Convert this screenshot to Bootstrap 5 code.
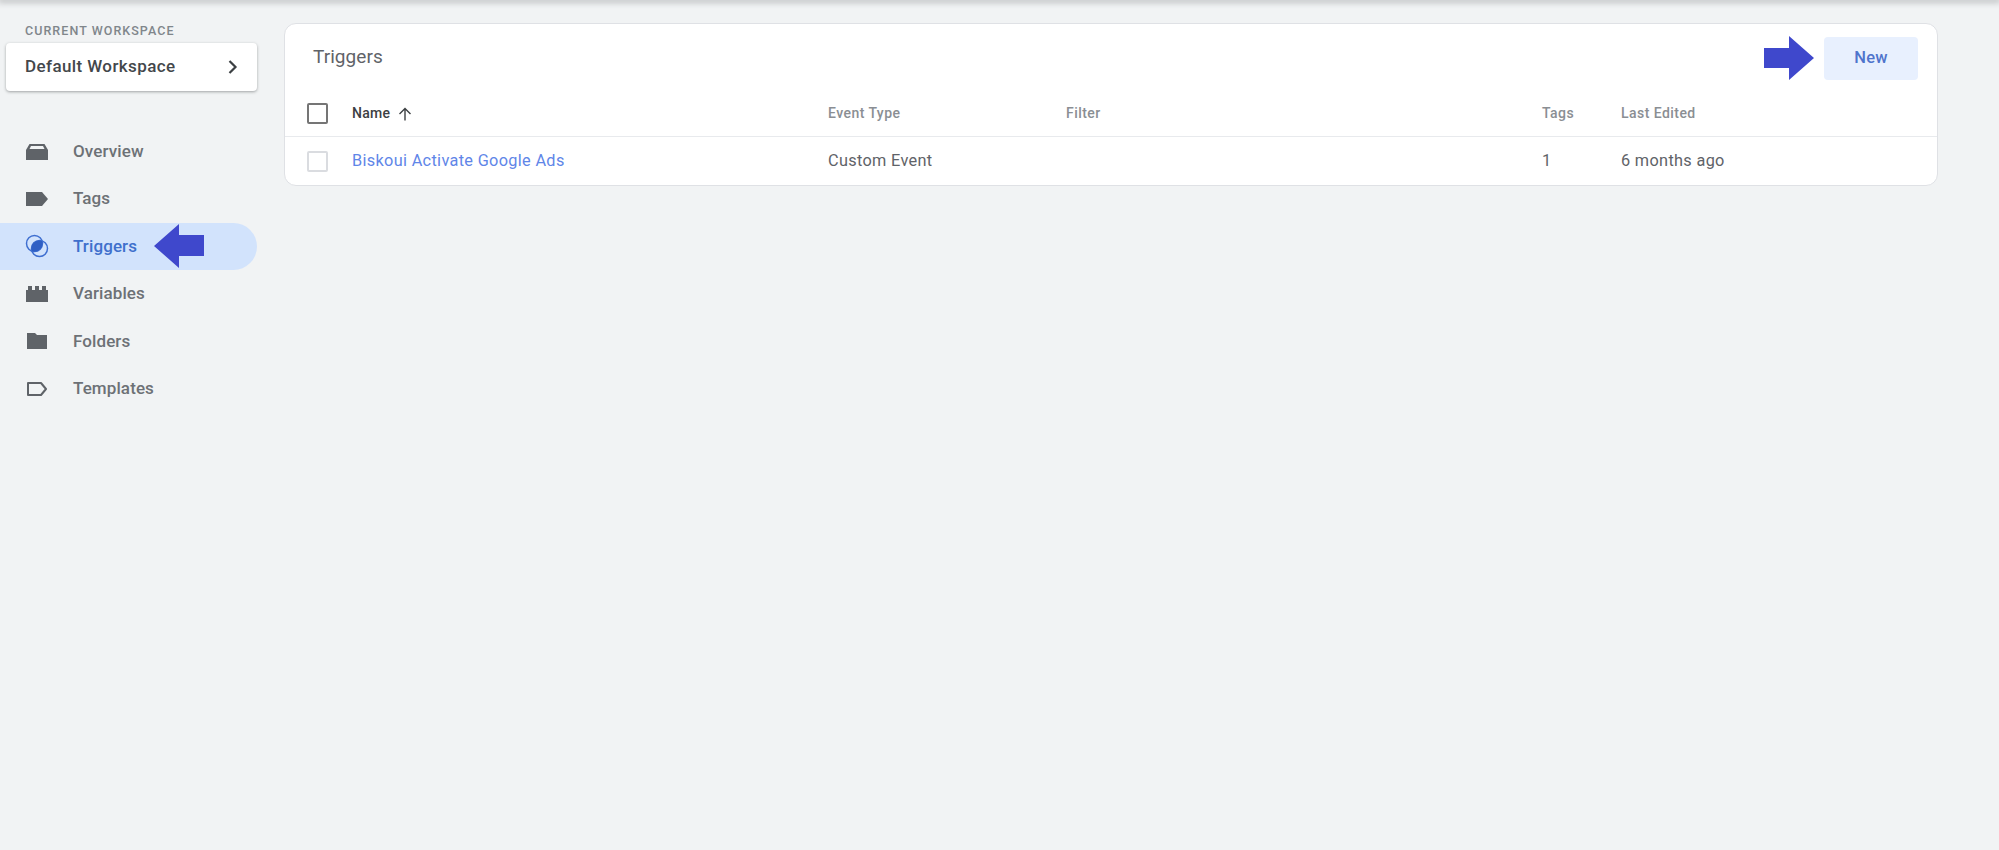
<!DOCTYPE html>
<html lang="en">
<head>
    <meta charset="UTF-8">
    <meta name="viewport" content="width=device-width, initial-scale=1">
    <title>Triggers</title>
    <link href="https://cdn.jsdelivr.net/npm/bootstrap@5.3.0/dist/css/bootstrap.min.css" rel="stylesheet">
    <script src="https://cdn.jsdelivr.net/npm/bootstrap@5.3.0/dist/js/bootstrap.bundle.min.js"></script>
    <style>
        html, body { height: 100%; }
        body {
            background: #f1f3f4;
            font-family: Roboto, "Liberation Sans", sans-serif;
            color: #5f6368;
            overflow: hidden;
        }
        .top-shade {
            height: 0;
            box-shadow: 0 0 6px 2px rgba(60, 64, 67, .38);
        }
        .side-col { width: 257px; padding-top: 24px; flex: none; }
        .ws-label {
            margin-left: 25px;
            font-size: 12.5px;
            line-height: 14px;
            font-weight: 500;
            letter-spacing: 1.05px;
            color: #80868b;
        }
        .ws-box {
            margin: 5px 0 0 6px;
            height: 48px;
            padding: 0 18px 0 19px;
            background: #fff;
            border-radius: 4px;
            box-shadow: 0 1px 3px rgba(60, 64, 67, .45);
            font-size: 17px;
            font-weight: 500;
            letter-spacing: .4px;
            color: #43474b;
        }
        .side-nav { margin-top: 37px; }
        .side-link {
            height: 47.4px;
            padding-left: 25px;
            font-size: 17px;
            font-weight: 500;
            letter-spacing: .1px;
            color: #6d7176;
            text-decoration: none;
            border-radius: 0 24px 24px 0;
        }
        .side-link.on { background: #d2e3fc; color: #3f70cc; }
        .side-ico { width: 24px; height: 24px; margin-right: 24px; flex: none; }
        .mark-left { margin-left: 17px; }
        .main-col { padding: 23px 61px 0 27px; flex: 1; min-width: 0; }
        .trig-card {
            background: #fff;
            border: 1px solid #dfe1e5;
            border-radius: 12px;
            height: 163px;
        }
        .trig-head { height: 72px; padding: 12px 19px 0 28px; }
        .trig-title { font-size: 19px; line-height: 24px; color: #5f6368; margin-top: 9px; letter-spacing: .05px; }
        .new-btn {
            width: 94px;
            height: 43px;
            background: #e8f0fe;
            border: 0;
            border-radius: 4px;
            color: #4f74cc;
            font-size: 16.5px;
            font-weight: 500;
            letter-spacing: .3px;
        }
        .mark-right { margin-right: 10px; }
        .trig-grid {
            display: grid;
            grid-template-columns: 67px 476px 238px 476px 79px 1fr;
            align-items: center;
        }
        .grid-head {
            height: 41px;
            padding-bottom: 5px;
            font-size: 14px;
            font-weight: 500;
            letter-spacing: .45px;
            color: #8a8e93;
            border-bottom: 1px solid #e8eaed;
        }
        .grid-row { height: 47px; padding-top: 1px; font-size: 16.3px; letter-spacing: .33px; color: #5f6368; }
        .check-cell { padding-left: 22px; }
        .fake-check { display: block; width: 21px; height: 21px; border-radius: 2px; }
        .fake-check.dark { border: 2px solid #757575; }
        .fake-check.pale { border: 2px solid #dadce0; }
        .name-head { color: #3c4043; letter-spacing: .3px; }
        .trig-link { color: #5f86e8; text-decoration: none; }
    </style>
</head>
<body>
    <div class="top-shade"></div>
    <div class="d-flex">
        <div class="side-col">
            <div class="ws-label">CURRENT WORKSPACE</div>
            <div class="ws-box d-flex align-items-center justify-content-between">
                <span>Default Workspace</span>
                <svg width="12" height="14" viewBox="0 0 12 14"><path d="M2.500 1 8.500 7l-6 6" fill="none" stroke="#3c4043" stroke-width="2.200"/></svg>
            </div>
            <nav class="side-nav">
                <a class="side-link d-flex align-items-center" href="#">
                    <svg class="side-ico" viewBox="0 0 24 24"><path d="M1 10 4.500 4h15L23 10v10H1z" fill="#5f6368"/><path d="M4.500 9 6 6h12l1.500 3z" fill="#f1f3f4"/></svg>
                    Overview
                </a>
                <a class="side-link d-flex align-items-center" href="#">
                    <svg class="side-ico" viewBox="0 0 24 24"><path d="M1 5h16l6 7-6 7H1z" fill="#5f6368"/></svg>
                    Tags
                </a>
                <a class="side-link on d-flex align-items-center" href="#">
                    <svg class="side-ico" viewBox="0 0 24 24"><circle cx="9.500" cy="9.500" r="8" fill="none" stroke="#3f6fd0" stroke-width="1.500"/><circle cx="14.500" cy="14.500" r="8" fill="none" stroke="#3f6fd0" stroke-width="1.500"/><path d="M17.070 6.930A8 8 0 0 1 6.930 17.070 8 8 0 0 1 17.070 6.930z" fill="#2f5fc4"/></svg>
                    Triggers
                    <svg class="mark-left" width="50" height="44" viewBox="0 0 50 44"><path d="M0 22 25 0v11h25v21H25v12z" fill="#3f48cc"/></svg>
                </a>
                <a class="side-link d-flex align-items-center" href="#">
                    <svg class="side-ico" viewBox="0 0 24 24"><path d="M1 8h2V4h4v4h3V4h4v4h3V4h4v4h2v12H1z" fill="#5f6368"/></svg>
                    Variables
                </a>
                <a class="side-link d-flex align-items-center" href="#">
                    <svg class="side-ico" viewBox="0 0 24 24"><path d="M2 4h8l2 2h10v14H2z" fill="#5f6368"/></svg>
                    Folders
                </a>
                <a class="side-link d-flex align-items-center" href="#">
                    <svg class="side-ico" viewBox="0 0 24 24"><path d="M3 6h13l5 6-5 6H3z" fill="none" stroke="#5f6368" stroke-width="2" stroke-linejoin="round"/></svg>
                    Templates
                </a>
            </nav>
        </div>
        <div class="main-col">
            <div class="trig-card">
                <div class="trig-head d-flex justify-content-between align-items-start">
                    <div class="trig-title">Triggers</div>
                    <div class="d-flex align-items-center">
                        <svg class="mark-right" width="50" height="44" viewBox="0 0 50 44"><path d="M50 22 25 0v12H0v20h25v12z" fill="#3f48cc"/></svg>
                        <button class="new-btn">New</button>
                    </div>
                </div>
                <div class="trig-grid grid-head">
                    <div class="check-cell"><span class="fake-check dark"></span></div>
                    <div class="name-head d-flex align-items-center gap-2">Name
                        <svg width="14" height="14" viewBox="0 0 14 14"><path d="M7 13.500V1.500M1.500 7 7 1.500 12.500 7" fill="none" stroke="#3c4043" stroke-width="1.400"/></svg>
                    </div>
                    <div>Event Type</div>
                    <div>Filter</div>
                    <div>Tags</div>
                    <div>Last Edited</div>
                </div>
                <div class="trig-grid grid-row">
                    <div class="check-cell"><span class="fake-check pale"></span></div>
                    <div><a class="trig-link" href="#">Biskoui Activate Google Ads</a></div>
                    <div>Custom Event</div>
                    <div></div>
                    <div>1</div>
                    <div>6 months ago</div>
                </div>
            </div>
        </div>
    </div>
</body>
</html>
